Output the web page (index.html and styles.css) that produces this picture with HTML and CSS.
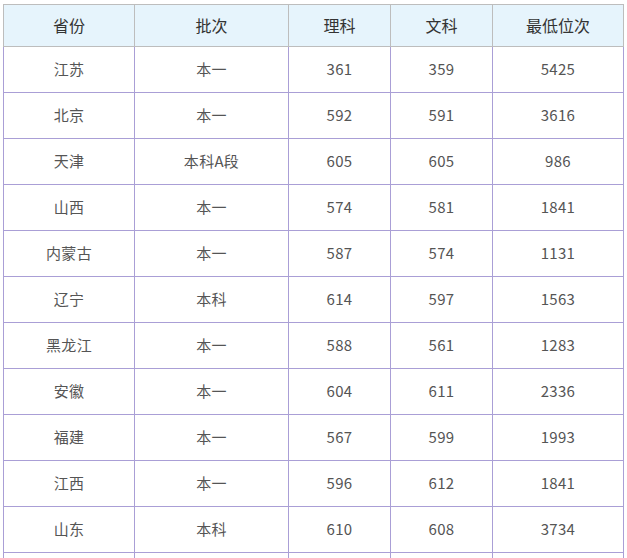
FILE: index.html
```html
<!DOCTYPE html>
<html lang="zh">
<head>
<meta charset="utf-8">
<link rel="stylesheet" href="styles.css">
</head>
<body>
<table class="score-table">
  <colgroup>
    <col class="c1"><col class="c2"><col class="c3"><col class="c4"><col class="c5">
  </colgroup>
  <thead>
    <tr><th>省份</th><th>批次</th><th>理科</th><th>文科</th><th>最低位次</th></tr>
  </thead>
  <tbody>
    <tr><td>江苏</td><td>本一</td><td>361</td><td>359</td><td>5425</td></tr>
    <tr><td>北京</td><td>本一</td><td>592</td><td>591</td><td>3616</td></tr>
    <tr><td>天津</td><td>本科A段</td><td>605</td><td>605</td><td>986</td></tr>
    <tr><td>山西</td><td>本一</td><td>574</td><td>581</td><td>1841</td></tr>
    <tr><td>内蒙古</td><td>本一</td><td>587</td><td>574</td><td>1131</td></tr>
    <tr><td>辽宁</td><td>本科</td><td>614</td><td>597</td><td>1563</td></tr>
    <tr><td>黑龙江</td><td>本一</td><td>588</td><td>561</td><td>1283</td></tr>
    <tr><td>安徽</td><td>本一</td><td>604</td><td>611</td><td>2336</td></tr>
    <tr><td>福建</td><td>本一</td><td>567</td><td>599</td><td>1993</td></tr>
    <tr><td>江西</td><td>本一</td><td>596</td><td>612</td><td>1841</td></tr>
    <tr><td>山东</td><td>本科</td><td>610</td><td>608</td><td>3734</td></tr>
    <tr class="partial"><td></td><td></td><td></td><td></td><td></td></tr>
  </tbody>
</table>
</body>
</html>
```
FILE: styles.css
```css
html, body {
  margin: 0;
  padding: 0;
  background: #fff;
}
body {
  padding: 4px 0 0 3px;
  font-family: "Microsoft YaHei", "Noto Sans CJK SC", "Noto Sans", sans-serif;
}
.score-table {
  border-collapse: collapse;
  table-layout: fixed;
  width: 620px;
}
.c1 { width: 131px; }
.c2 { width: 154px; }
.c3 { width: 102px; }
.c4 { width: 102px; }
.c5 { width: 131px; }
.score-table th {
  height: 39px;
  padding: 0 0 2px;
  background: #e6f4fc;
  border: 1px solid #bdbdbd;
  font-weight: normal;
  font-size: 16px;
  color: #333;
  text-align: center;
  vertical-align: middle;
}
.score-table td {
  height: 43px;
  padding: 0 0 2px;
  border: 1px solid #aa9fd6;
  font-size: 15px;
  color: #555;
  text-align: center;
  vertical-align: middle;
  letter-spacing: 0.3px;
}
```
